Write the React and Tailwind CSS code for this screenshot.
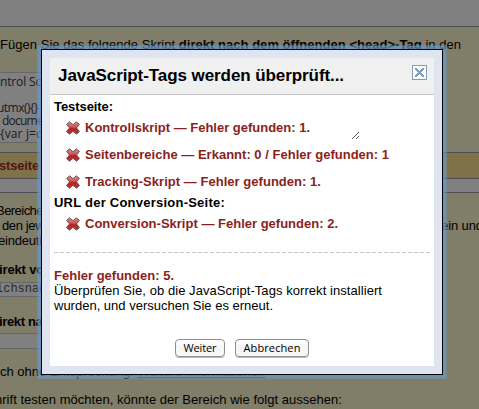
const sans = "font-['Liberation_Sans',sans-serif]";

function CloseIcon() {
  return (
    <svg width="15" height="15" viewBox="0 0 15 15" shapeRendering="crispEdges">
      <rect x="0.5" y="0.5" width="14" height="14" fill="#fff" stroke="#7f9dbd" />
      <path
        d="M3 3h2v1h1v1h1v1h1v-1h1v-1h1v-1h2v2h-1v1h-1v1h-1v1h1v1h1v1h1v2h-2v-1h-1v-1h-1v-1h-1v1h-1v1h-1v1h-2v-2h1v-1h1v-1h1v-1h-1v-1h-1v-1h-1z"
        fill="#7f9dbd"
      />
    </svg>
  );
}

function ErrorIcon() {
  return (
    <svg width="14" height="14" viewBox="0 0 14 14" className="mr-[5px] shrink-0">
      <defs>
        <linearGradient id="red" x1="0" y1="0" x2="0" y2="1">
          <stop offset="0" stopColor="#dc9092" />
          <stop offset="0.42" stopColor="#d05557" />
          <stop offset="0.55" stopColor="#b02422" />
          <stop offset="1" stopColor="#c0392f" />
        </linearGradient>
      </defs>
      <path
        d="M3.6 0.8L7 3.7 10.4 0.8 13.4 3.4 10.5 6.9 13.4 10.5 10.6 13.2 7 10.3 3.4 13.2 0.6 10.5 3.5 6.9 0.6 3.4z"
        fill="url(#red)"
        stroke="#5f4649"
        strokeWidth="0.9"
        strokeLinejoin="round"
      />
    </svg>
  );
}

/* A single line of text set to a fixed measure. */
function Fit({ w, className = "", children }) {
  return (
    <span
      className={`block shrink-0 whitespace-nowrap ${className}`}
      ref={(el) => {
        if (!el || !w) return;
        el.style.letterSpacing = "0px";
        const range = document.createRange();
        range.selectNodeContents(el);
        const natural = range.getBoundingClientRect().width;
        el.style.letterSpacing = `${(w - natural) / el.textContent.length}px`;
      }}
    >
      {children}
    </span>
  );
}

function Check({ children, className = "", width }) {
  return (
    <div className={`flex h-[15px] items-center pl-3 font-bold text-[#8a1f1b] ${className}`}>
      <ErrorIcon />
      <Fit w={width}>{children}</Fit>
    </div>
  );
}

function Button({ children, className, w }) {
  return (
    <button
      className={`flex h-[18px] items-center justify-center rounded-[4px] border border-[#8f8f8f] bg-linear-to-b from-white via-[#f4f4f4] to-[#f9f9f9] pb-px font-['Open_Sans',sans-serif] text-[11px] leading-none font-medium text-black shadow-[0_1px_0_#bbb] ${className}`}
    >
      <Fit w={w}>{children}</Fit>
    </button>
  );
}

function Page() {
  return (
    <div className="flex h-[409px] w-[479px] flex-col overflow-hidden bg-[#807d68] text-[13px] leading-[15px] text-black">
      <div className="h-[27px] shrink-0 border-b border-[#4d4d55] bg-[#808080]" />
      <div className="h-[45px] shrink-0 pt-[10px]">
        <Fit w={461}>
          Fügen Sie das folgende Skript <b>direkt nach dem öffnenden &lt;head&gt;-Tag</b> in den
        </Fit>
      </div>
      <div className="h-[71px] w-[300px] shrink-0 border-y border-[#66666a] bg-[#808080] pt-px font-['Open_Sans',sans-serif] text-[12px] leading-[13px] whitespace-pre text-[#1a1a1a]">
        <Fit w={60} className="pt-px">ntrol Script</Fit>
        <Fit w={41} className="-ml-[3px] pt-[13px]">utmx(){"{}"}</Fit>
        <Fit w={51} className="pl-[2px]">document</Fit>
        <Fit w={42}>{"{var j=c"}</Fit>
      </div>
      <div className="mt-[9px] h-[27px] shrink-0 border-y border-[#4d4d55] bg-[#807248] pt-[5px] font-bold text-[#521414]">
        <Fit w={40} className="-ml-px">stseite</Fit>
      </div>
      <div className="h-[14px] shrink-0 border-b border-[#4d4d55] bg-[#808080]" />
      <div className="flex h-[67px] shrink-0 flex-col pt-[10px]">
        <Fit w={47} className="-ml-[4px]">Bereiche</Fit>
        <div className="flex justify-between pl-[2px]">
          <Fit w={49}>den jewe</Fit>
          <Fit className="-mr-[4px]" w={42}>ein und</Fit>
        </div>
        <Fit w={51} className="-ml-[2px]">eindeutig</Fit>
      </div>
      <div className="h-[22px] shrink-0 pt-[2px] font-bold">
        <Fit w={50} className="-ml-px">irekt vor</Fit>
      </div>
      <div className="h-[15px] w-[300px] shrink-0 border-y border-[#66666a] bg-[#808080] font-['Liberation_Mono',monospace] text-[12px] leading-[13px] text-[#2b2b2b]">
        <div className="-ml-[4px]">ichsname</div>
      </div>
      <div className="mt-[17px] h-[19px] shrink-0 font-bold">
        <Fit w={58} className="-ml-px">irekt nach</Fit>
      </div>
      <div className="h-[16px] w-[300px] shrink-0 border-y border-[#66666a] bg-[#808080]" />
      <div className="mt-[15px] shrink-0">
        <Fit w={265}>
          ch ohne Entsprechung. <span className="text-[#001a90] underline">Weitere Informationen</span>
        </Fit>
      </div>
      <div className="-ml-[5px] mt-[13px] shrink-0">
        <Fit w={347}>hrift testen möchten, könnte der Bereich wie folgt aussehen:</Fit>
      </div>
    </div>
  );
}

function Dialog() {
  return (
    <div className="absolute top-[49px] left-[41px] w-[402px] shadow-[0_0_0_3px_rgba(100,155,210,0.45),0_0_1px_4px_rgba(105,155,200,0.4)]">
      <div className="flex h-[326px] border border-black bg-[#dfe5f0] p-2 text-[13px] leading-[15px] text-black">
        <div className="flex h-[308px] w-[384px] flex-col bg-white">
          <div className="flex h-[37px] shrink-0 justify-between border-b border-[#c6c6c6] bg-[#f0f0f0] pr-[7px] pl-2">
            <h1 className="pt-[8px] text-[17px] leading-[20px] font-bold">
              <Fit w={286}>JavaScript-Tags werden überprüft...</Fit>
            </h1>
            <div className="pt-[7px]"><CloseIcon /></div>
          </div>
          <div className="flex flex-col px-1 pt-[4px]">
            <div className="font-bold"><Fit w={59}>Testseite:</Fit></div>
            <div className="flex justify-between">
              <Check className="mt-[6px]" width={225}>Kontrollskript — Fehler gefunden: 1.</Check>
              <svg width="8" height="8" viewBox="0 0 8 8" className="mt-[18px] mr-[70px] -mb-[5px]" shapeRendering="crispEdges">
                <path d="M6 0h1v1h-1v1h-1v1h-1v1h-1v1h-1v1h-1v1h-1v-1h1v-1h1v-1h1v-1h1v-1h1v-1h1zM6 4h1v1h-1v1h-1v1h-1v-1h1v-1h1z" fill="#555" />
              </svg>
            </div>
            <Check className="mt-[12px]" width={304}>Seitenbereiche — Erkannt: 0 / Fehler gefunden: 1</Check>
            <Check className="mt-[12px]" width={236}>Tracking-Skript — Fehler gefunden: 1.</Check>
            <div className="mt-[6px] font-bold"><Fit w={171}>URL der Conversion-Seite:</Fit></div>
            <Check className="mt-[6px]" width={253}>Conversion-Skript — Fehler gefunden: 2.</Check>
            <div className="mt-[21px] h-px bg-[repeating-linear-gradient(90deg,#c8c8c8_0px,#c8c8c8_4px,transparent_4px,transparent_6px)]" />
            <div className="mt-[15px] font-bold text-[#8a1f1b]"><Fit w={120}>Fehler gefunden: 5.</Fit></div>
            <Fit w={328}>Überprüfen Sie, ob die JavaScript-Tags korrekt installiert</Fit>
            <Fit w={219}>wurden, und versuchen Sie es erneut.</Fit>
            <div className="mt-[26px] flex justify-center gap-[10px]">
              <Button className="w-[50px]" w={33}>Weiter</Button>
              <Button className="w-[74px]" w={57}>Abbrechen</Button>
            </div>
          </div>
        </div>
      </div>
    </div>
  );
}

export default function App() {
  return (
    <div className={`relative h-[409px] w-[479px] overflow-hidden ${sans}`}>
      <Page />
      <Dialog />
    </div>
  );
}
